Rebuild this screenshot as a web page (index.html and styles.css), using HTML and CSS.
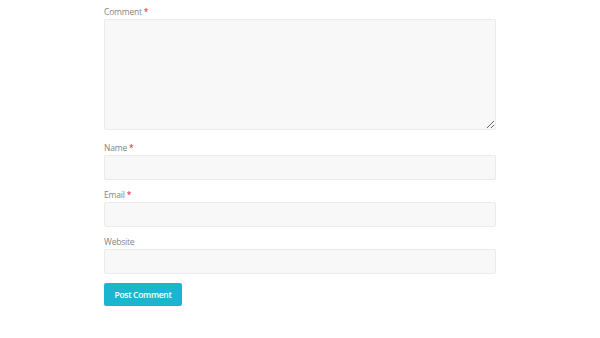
FILE: index.html
```html
<!doctype html>
<html lang="en">
<head>
    <meta charset="UTF-8">
    <title>Comment form</title>
    <link rel="stylesheet" href="styles.css">
</head>
<body>
    <form class="comment-form">
        <p class="field">
            <label for="comment">Comment <span class="req">*</span></label>
            <textarea id="comment" class="box area"></textarea>
        </p>
        <p class="field">
            <label for="name">Name <span class="req">*</span></label>
            <input id="name" class="box" type="text">
        </p>
        <p class="field">
            <label for="email">Email <span class="req">*</span></label>
            <input id="email" class="box" type="text">
        </p>
        <p class="field">
            <label for="url">Website</label>
            <input id="url" class="box" type="text">
        </p>
        <p class="submit">
            <button type="button" class="btn">Post Comment</button>
        </p>
    </form>
</body>
</html>
```

FILE: styles.css
```css
*{
    margin: 0;
    padding: 0;
    box-sizing: border-box;
}
body{
    background: #fff;
    font-family: "Open Sans", "Liberation Sans", sans-serif;
    color: #777;
}
.comment-form{
    width: 392px;
    margin-left: 104px;
    padding-top: 6px;
    display: flex;
    flex-direction: column;
    gap: 9px;
}
.field{
    display: flex;
    flex-direction: column;
}
.field label{
    font-size: 8.5px;
    line-height: 12px;
    margin-bottom: 1px;
    letter-spacing: -0.2px;
    color: #858585;
}
.req{
    color: #e0202a;
}
.box{
    display: block;
    width: 100%;
    height: 25px;
    background: #f8f8f8;
    border: 1px solid #ebebeb;
    border-radius: 2px;
    outline: none;
    font-family: inherit;
}
.area{
    height: 111px;
    margin-bottom: 3px;
    resize: vertical;
}
.submit{
    display: flex;
}
.btn{
    width: 78px;
    height: 23px;
    border: none;
    border-radius: 2px;
    background: #1ab5cf;
    color: #fff;
    font-family: inherit;
    font-size: 8.5px;
    font-weight: 600;
    letter-spacing: -0.3px;
    cursor: pointer;
}
.btn:hover{
    background: #159fb7;
}
```
